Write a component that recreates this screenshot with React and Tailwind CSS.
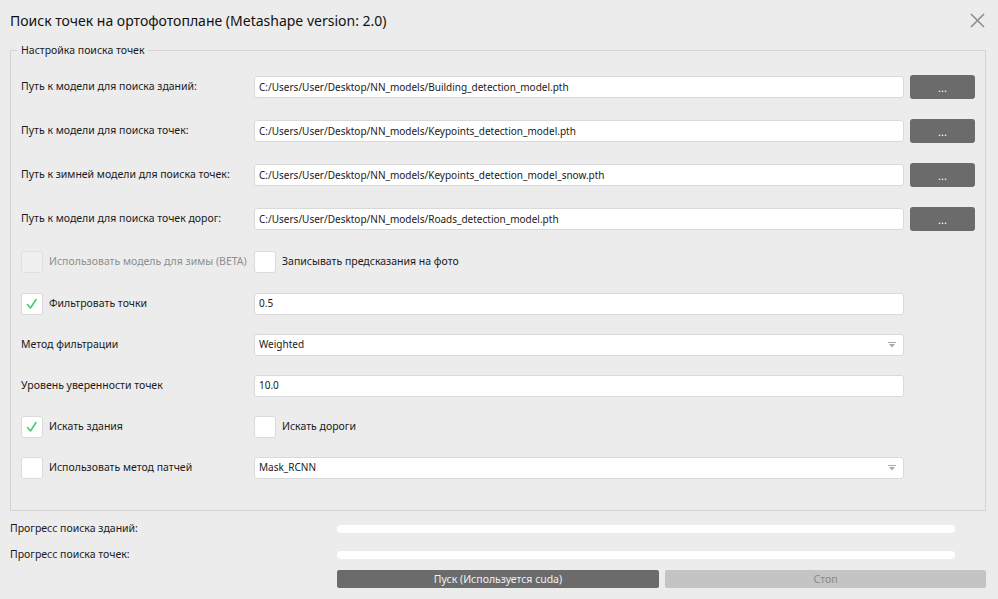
import React from 'react';

const font = { fontFamily: '"Noto Sans", "Open Sans", sans-serif' };

// Small check mark used by the Qt-style checkboxes
const CheckBox = ({ checked, disabled }) => (
  <div
    className={`w-[22px] h-[22px] shrink-0 rounded-[3px] border flex items-center justify-center ${
      disabled ? 'bg-[#f0f0f0] border-[#e0e0e0]' : 'bg-white border-[#dadada]'
    }`}
  >
    {checked && (
      <svg width="14" height="14" viewBox="0 0 14 14" fill="none">
        <path d="M2.5 7.5 L5.5 11 L11 2.5" stroke="#3ccf6e" strokeWidth="1.6" strokeLinecap="round" strokeLinejoin="round" />
      </svg>
    )}
  </div>
);

const TextBox = ({ value, dropdown }) => (
  <div className="w-[650px] h-[22px] bg-white border border-[#d9d9d9] rounded-[3px] flex items-center pl-[4px] pr-[7px] text-[10px] text-[#1a1a1a]">
    <span className="flex-1">{value}</span>
    {dropdown && (
      <svg width="8" height="6" viewBox="0 0 8 6">
        <rect x="0" y="0" width="8" height="1" fill="#a8a8a8" />
        <path d="M1 2 L7 2 L4 5.5 Z" fill="#a8a8a8" />
      </svg>
    )}
  </div>
);

const BrowseButton = () => (
  <button className="ml-[6px] w-[65px] h-[24px] bg-[#6b6b6b] rounded-[3px] text-white text-[11px] leading-none flex items-center justify-center">
    ...
  </button>
);

const pathRows = [
  ['Путь к модели для поиска зданий:', 'C:/Users/User/Desktop/NN_models/Building_detection_model.pth'],
  ['Путь к модели для поиска точек:', 'C:/Users/User/Desktop/NN_models/Keypoints_detection_model.pth'],
  ['Путь к зимней модели для поиска точек:', 'C:/Users/User/Desktop/NN_models/Keypoints_detection_model_snow.pth'],
  ['Путь к модели для поиска точек дорог:', 'C:/Users/User/Desktop/NN_models/Roads_detection_model.pth'],
];

export default function App() {
  return (
    <div className="w-[998px] h-[599px] bg-[#ececec] text-[10.5px] text-[#1a1a1a] overflow-hidden whitespace-nowrap" style={font}>
      {/* Title bar */}
      <div className="h-[41px] flex items-center pl-[10px] pr-[13px]">
        <span className="flex-1 text-[14px] text-[#111]">Поиск точек на ортофотоплане (Metashape version: 2.0)</span>
        <svg width="15" height="15" viewBox="0 0 15 15">
          <path d="M1 1 L14 14 M14 1 L1 14" stroke="#8c8c8c" strokeWidth="1.6" />
        </svg>
      </div>

      {/* Settings group */}
      <div className="relative mt-[9px] ml-[10px] w-[976px] h-[461px] border border-[#d4d4d4] pt-[14px] pl-[10px]">
        <span className="absolute left-[6px] top-[-9px] px-[4px] bg-[#ececec] leading-[16px]">Настройка поиска точек</span>

        {pathRows.map(([label, value]) => (
          <div key={label} className="h-[44px] flex items-center">
            <span className="w-[233px]">{label}</span>
            <TextBox value={value} />
            <BrowseButton />
          </div>
        ))}

        <div className="h-[42px] flex items-center">
          <div className="w-[233px] flex items-center gap-[6px]">
            <CheckBox disabled />
            <span className="text-[#8e8e8e]">Использовать модель для зимы (BETA)</span>
          </div>
          <div className="flex items-center gap-[6px]">
            <CheckBox />
            <span>Записывать предсказания на фото</span>
          </div>
        </div>

        <div className="h-[41px] flex items-center">
          <div className="w-[233px] flex items-center gap-[6px]">
            <CheckBox checked />
            <span>Фильтровать точки</span>
          </div>
          <TextBox value="0.5" />
        </div>

        <div className="h-[41px] flex items-center">
          <span className="w-[233px]">Метод фильтрации</span>
          <TextBox value="Weighted" dropdown />
        </div>

        <div className="h-[41px] flex items-center">
          <span className="w-[233px]">Уровень уверенности точек</span>
          <TextBox value="10.0" />
        </div>

        <div className="h-[41px] flex items-center">
          <div className="w-[233px] flex items-center gap-[6px]">
            <CheckBox checked />
            <span>Искать здания</span>
          </div>
          <div className="flex items-center gap-[6px]">
            <CheckBox />
            <span>Искать дороги</span>
          </div>
        </div>

        <div className="h-[41px] flex items-center">
          <div className="w-[233px] flex items-center gap-[6px]">
            <CheckBox />
            <span>Использовать метод патчей</span>
          </div>
          <TextBox value="Mask_RCNN" dropdown />
        </div>
      </div>

      {/* Progress */}
      <div className="pl-[10px] mt-[5px]">
        <div className="h-[26px] flex items-center">
          <span className="w-[327px]">Прогресс поиска зданий:</span>
          <div className="w-[618px] h-[8px] bg-white rounded-full" />
        </div>
        <div className="h-[26px] flex items-center">
          <span className="w-[327px]">Прогресс поиска точек:</span>
          <div className="w-[618px] h-[8px] bg-white rounded-full" />
        </div>
        <div className="flex gap-[6px] pl-[327px] mt-[2px]">
          <button className="w-[322px] h-[18px] bg-[#6b6b6b] rounded-[2px] text-[#f2f2f2] text-[10.5px] leading-none">
            Пуск (Используется cuda)
          </button>
          <button className="w-[321px] h-[18px] bg-[#c4c4c4] rounded-[2px] text-[#8a8a8a] text-[10.5px] leading-none">
            Стоп
          </button>
        </div>
      </div>
    </div>
  );
}
